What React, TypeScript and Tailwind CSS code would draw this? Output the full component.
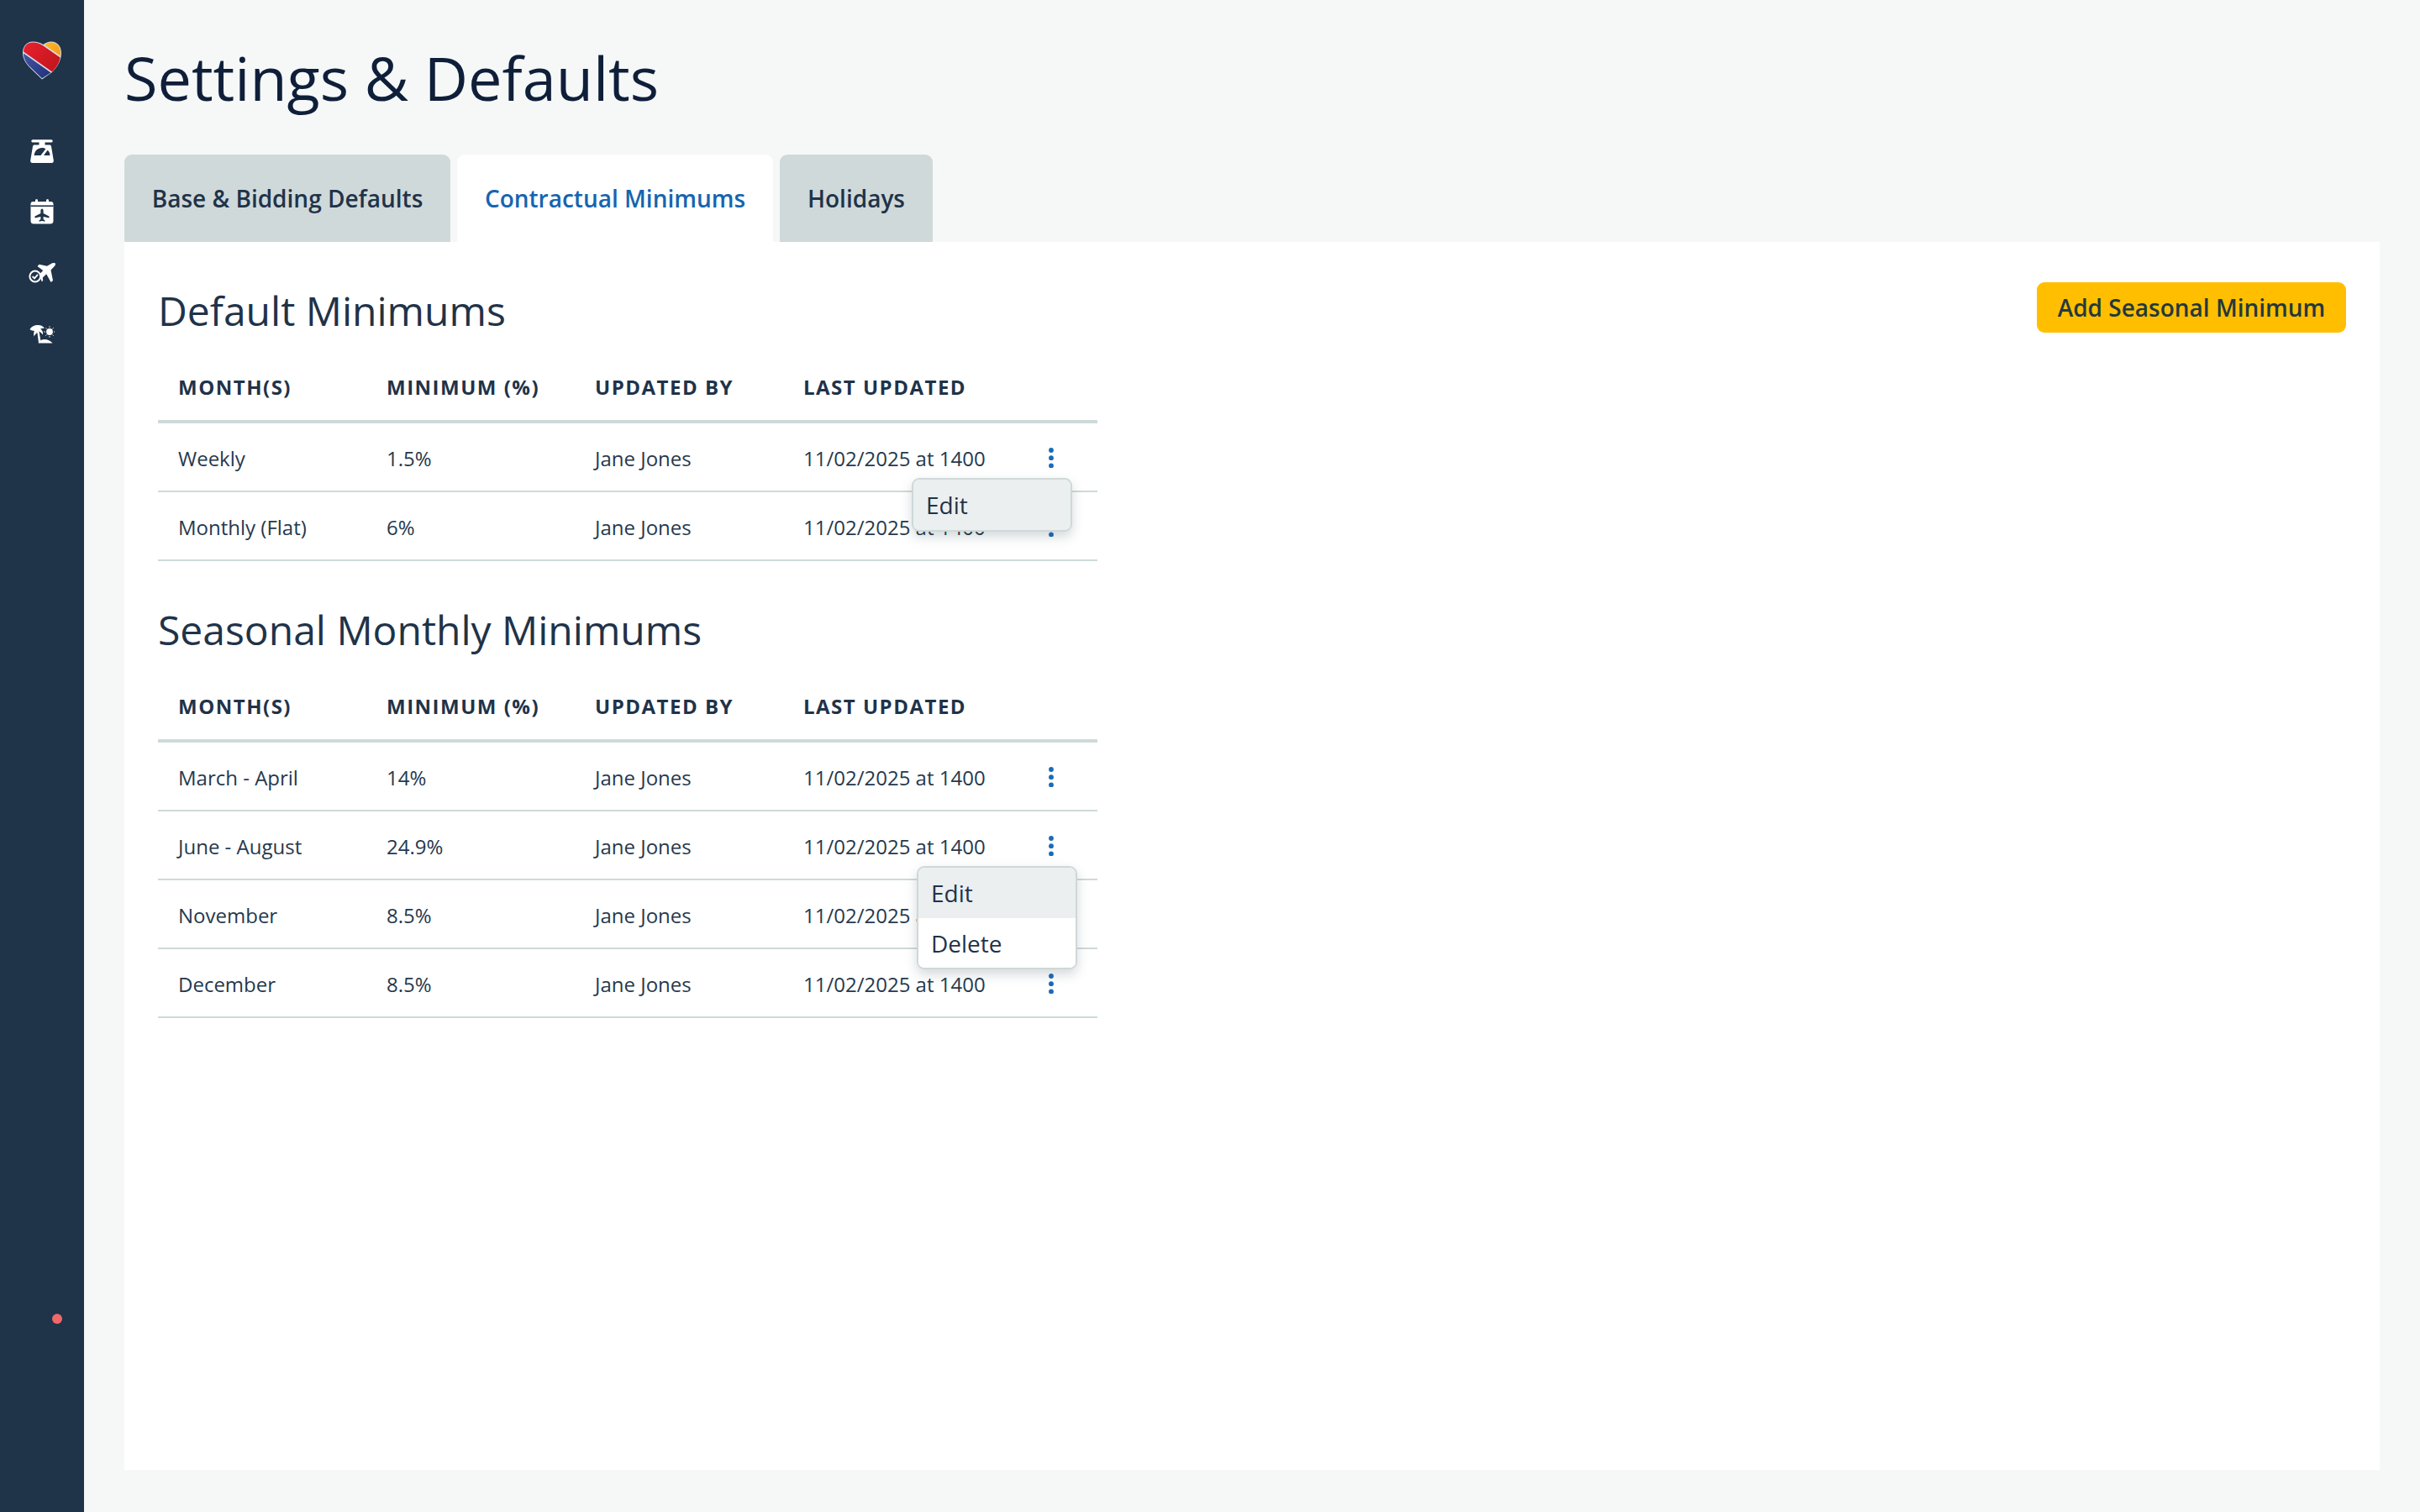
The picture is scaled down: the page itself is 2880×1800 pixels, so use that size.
import React from "react";

const font = { fontFamily: '"Open Sans", sans-serif' };

function Heart() {
  return (
    <svg width="46" height="46" viewBox="0 0 46 46" className="block">
      <defs>
        <linearGradient id="r" x1="0" y1="0" x2="1" y2="0.8">
          <stop offset="0" stopColor="#e9212f" />
          <stop offset="1" stopColor="#c1161c" />
        </linearGradient>
        <linearGradient id="b" x1="0" y1="0" x2="1" y2="0.6">
          <stop offset="0" stopColor="#3f56a6" />
          <stop offset="1" stopColor="#26357f" />
        </linearGradient>
        <linearGradient id="y" x1="0" y1="0" x2="1" y2="0.6">
          <stop offset="0" stopColor="#fdb827" />
          <stop offset="1" stopColor="#f6a11c" />
        </linearGradient>
      </defs>
      <path d="M23 45.5 L10 33 C4 27 0 21 0 14 C0 6 5 0.5 12 0.5 C17 0.5 21 2 24.5 4 C27.5 1.6 30.5 0.4 34 0.4 C41 0.4 46 6 46 14 C46 21 43 29 35 37 Z" fill="#d9dde2" />
      <path d="M1 12.5 C1.2 6 5.5 1.5 12 1.5 C17 1.5 20.5 3 24.5 5.4 L44.6 19.6 C43.8 25 41 30.5 35 36.5 Z" fill="url(#r)" />
      <path d="M1 14.4 L33.5 37.6 L23 44.2 L10.5 32.2 C4.5 26.5 1 21 1 14.4 Z" fill="url(#b)" />
      <path d="M26 4.5 C28.5 2.4 31 1.4 34 1.4 C40.5 1.4 45 6.5 45 14 C45 15.2 45 16.4 44.8 17.4 Z" fill="url(#y)" />
    </svg>
  );
}

function ScaleIcon() {
  return (
    <svg width="28" height="28" viewBox="0 0 28 28" className="block" fill="#fff">
      <path d="M3 0.2 H25 A1.7 1.7 0 0 1 25 3.6 H17.5 V6.6 H23 C24 6.6 24.7 7.2 25 8.2 L27.8 25 C28 26.8 27 28 25.5 28 H2.5 C1 28 0 26.8 0.2 25 L3 8.2 C3.3 7.2 4 6.6 5 6.6 H10.5 V3.6 H3 A1.7 1.7 0 0 1 3 0.2 Z" />
      <path d="M4.6 19 C5 13.8 9 10 14 10 C15.6 10 17.2 10.4 18.4 11.2 L12.5 19 Z" fill="#1f3349" />
      <path d="M20.6 12.8 C22.6 14.4 23.4 16.6 23.5 19 H16 Z" fill="#1f3349" />
    </svg>
  );
}

function CalIcon() {
  return (
    <svg width="28" height="30" viewBox="0 0 28 30" className="block" fill="#fff">
      <path d="M3.5 3 H6 V1.5 A1.5 1.5 0 0 1 9 1.5 V3 H19 V1.5 A1.5 1.5 0 0 1 22 1.5 V3 H24.5 C26.5 3 27.5 4.2 27.5 6 V26 C27.5 28.4 26 29.5 24 29.5 H4 C2 29.5 0.5 28.4 0.5 26 V6 C0.5 4.2 1.5 3 3.5 3 Z" />
      <rect x="0.5" y="7.4" width="27" height="1.6" fill="#1f3349" />
      <path d="M14 11.5 C15 11.5 15.6 12.6 15.6 14 V17 L22.5 20.5 V22.5 L15.6 21 V24 L17.5 25.5 V26.8 L14 26 L10.5 26.8 V25.5 L12.4 24 V21 L5.5 22.5 V20.5 L12.4 17 V14 C12.4 12.6 13 11.5 14 11.5 Z" fill="#1f3349" />
    </svg>
  );
}

function PlaneCheck() {
  return (
    <svg width="32" height="24" viewBox="0 0 32 24" className="block">
      <path d="M31.5 0.3 C32.2 1 32 2.6 31 3.8 L26.5 8.4 L29 21 L26.6 23 L21.2 13.2 L16.8 17.4 L17.2 20.8 L15.8 22.4 L14.6 19 C14.2 17 13 15.8 12.2 15.4 L10 13.2 L11 12.2 L13 13.4 L17.2 9 L10.5 4 L12.6 1.8 L22 3.8 L26.8 0.9 C28.5 -0.1 30.5 -0.3 31.5 0.3 Z" fill="#fff" />
      <circle cx="7.8" cy="16" r="6.4" fill="#1f3349" stroke="#fff" strokeWidth="2" />
      <path d="M4.6 16 L7 18.4 L11 13.8" fill="none" stroke="#fff" strokeWidth="1.8" />
    </svg>
  );
}

function PalmSun() {
  return (
    <svg width="30" height="23" viewBox="0 0 30 23" className="block" fill="#fff">
      <path d="M0.5 6 C2.5 2.5 6 1 9.5 1 C12 0.5 15.5 1.5 18 4.5 C16 5 14.5 5 13 5.6 C15.2 7 16.6 9.5 16 12.5 C14.2 10.5 12.8 9 11.5 8.5 L13.8 22 H11 L9.4 10 C7.8 11 6.5 12.5 5.6 14.5 C4.8 12 5 10 6 8 C4 7.8 2 7.8 0.5 6 Z" />
      <path d="M10.5 22.4 C12 19.4 15 18 18 18 C21.5 18 25 19.6 27.5 22.4 Z" />
      <circle cx="24" cy="9" r="3.9" />
      <path d="M24 2.4 V4 M24 14 V15.6 M17.4 9 H19 M29 9 H30 M19.4 4.4 L20.5 5.5 M27.5 12.5 L28.6 13.6 M19.4 13.6 L20.5 12.5 M27.5 5.5 L28.6 4.4" stroke="#fff" strokeWidth="1" fill="none" />
    </svg>
  );
}

function Kebab() {
  return (
    <svg width="8" height="24" viewBox="0 0 8 24" className="block" fill="#1a6bb8">
      <circle cx="4" cy="3" r="2.9" />
      <circle cx="4" cy="12.2" r="2.9" />
      <circle cx="4" cy="21.4" r="2.9" />
    </svg>
  );
}

function Popup({ items, cls }: { items: string[]; cls: string }) {
  return (
    <div className={`absolute z-10 w-[191px] rounded-[9px] overflow-hidden border-2 border-[#cfd8d8] bg-white text-[28px] text-[#1f3349] shadow-[0_6px_14px_rgba(60,80,90,0.22)] ${cls}`}>
      {items.map((t, i) => (
        <div key={t} className={`h-[59.5px] leading-[60.5px] pl-[15px] ${i === 0 ? "bg-[#ebeff0]" : "bg-white"}`}>
          {t}
        </div>
      ))}
    </div>
  );
}

type Row = { m: string; p: string; popup?: React.ReactNode };

function MinTable({ rows }: { rows: Row[] }) {
  const headers = ["MONTH(S)", "MINIMUM (%)", "UPDATED BY", "LAST UPDATED"];
  return (
    <div className="w-[1118px] text-[#1f3349]">
      <div className="grid grid-cols-[248px_248px_248px_248px_126px] h-[80px] items-center border-b-[4px] border-[#cfd9d9] pb-[3px]">
        {headers.map((h) => (
          <div key={h} className="pl-[24px] text-[24px] font-bold tracking-[1.5px] leading-none">{h}</div>
        ))}
        <div />
      </div>
      {rows.map((r) => (
        <div key={r.m} className="relative grid grid-cols-[248px_248px_248px_248px_126px] h-[82px] items-center border-b-2 border-[#cfd9d9] text-[24px] text-[#26394e] pt-[3px]">
          <div className="pl-[24px]">{r.m}</div>
          <div className="pl-[24px]">{r.p}</div>
          <div className="pl-[24px]">Jane Jones</div>
          <div className="pl-[24px]">11/02/2025 at 1400</div>
          <div className="pl-[67px] pb-[2px]"><Kebab /></div>
          {r.popup}
        </div>
      ))}
    </div>
  );
}

export default function App() {
  return (
    <div className="flex h-[1800px] w-[2880px] overflow-hidden bg-[#f5f8f7]" style={font}>
      <aside className="flex w-[100px] shrink-0 flex-col items-center bg-[#1f3349] pt-[49px]">
        <Heart />
        <div className="mt-[71px]"><ScaleIcon /></div>
        <div className="mt-[43px]"><CalIcon /></div>
        <div className="mt-[46px]"><PlaneCheck /></div>
        <div className="mt-[49px]"><PalmSun /></div>
        <div className="ml-[36px] mt-[1155px] h-[12px] w-[12px] rounded-full bg-[#f0686a]" />
      </aside>
      <main className="flex min-w-0 flex-1 flex-col pl-[48px] pr-[48px] pb-[50px]">
        <h1 className="mt-[44px] h-[98px] text-[72px] font-normal leading-[96px] text-[#0f1f3a]">Settings &amp; Defaults</h1>
        <div className="mt-[42px] flex h-[104px] items-stretch gap-[8px] text-[28px] font-semibold">
          <div className="flex w-[388px] items-center justify-center rounded-t-[9px] bg-[#cfd9d9] text-[#1f3349]">Base &amp; Bidding Defaults</div>
          <div className="flex w-[376px] items-center justify-center rounded-t-[9px] bg-white text-[#1565b0]">Contractual Minimums</div>
          <div className="flex w-[182px] items-center justify-center rounded-t-[9px] bg-[#cfd9d9] text-[#1f3349]">Holidays</div>
        </div>
        <section className="relative flex-1 bg-white pl-[40px] pr-[40px]">
          <div className="flex items-start justify-between pt-[47px]">
            <h2 className="h-[71px] text-[48px] font-normal leading-[70px] text-[#1f3349]">Default Minimums</h2>
            <button className="mt-[1px] h-[60px] w-[368px] rounded-[9px] bg-[#ffbf00] text-[28px] font-semibold text-[#24383f]">Add Seasonal Minimum</button>
          </div>
          <div className="mt-[18px]">
            <MinTable
              rows={[
                { m: "Weekly", p: "1.5%", popup: <Popup items={["Edit"]} cls="left-[897px] top-[65px] !bg-[#ebeff0]" /> },
                { m: "Monthly (Flat)", p: "6%" },
              ]}
            />
          </div>
          <h2 className="mt-[47px] h-[70px] text-[48px] font-normal leading-[70px] text-[#1f3349]">Seasonal Monthly Minimums</h2>
          <div className="mt-[19px]">
            <MinTable
              rows={[
                { m: "March - April", p: "14%" },
                { m: "June - August", p: "24.9%", popup: <Popup items={["Edit", "Delete"]} cls="left-[903px] top-[65px]" /> },
                { m: "November", p: "8.5%" },
                { m: "December", p: "8.5%" },
              ]}
            />
          </div>
        </section>
      </main>
    </div>
  );
}
